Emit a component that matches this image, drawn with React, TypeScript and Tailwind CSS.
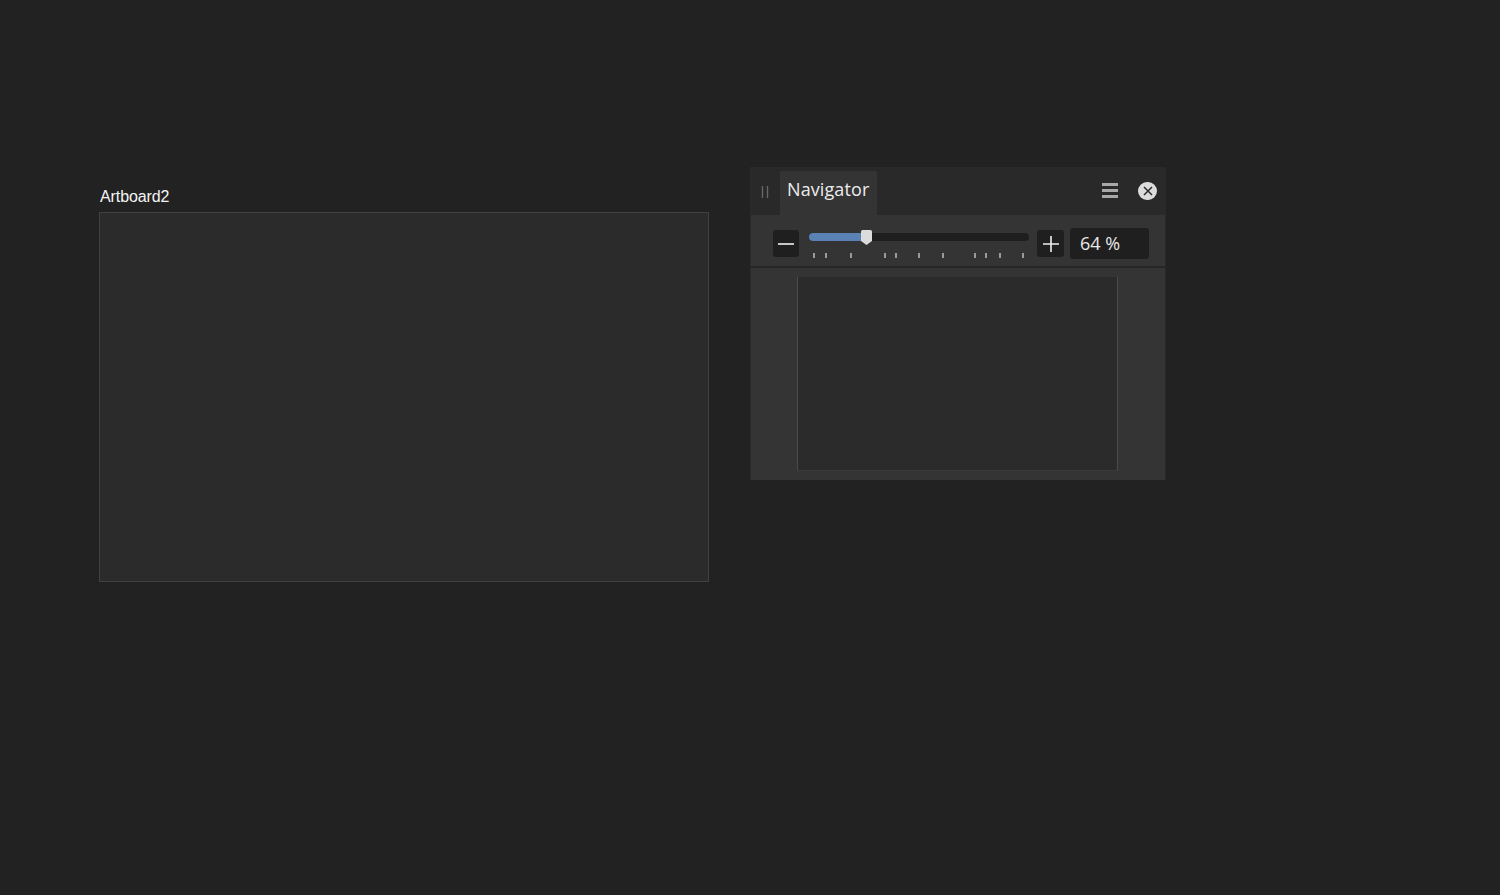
import React from 'react';

const TICKS = [813, 825, 850, 884, 895, 918, 942, 974, 985, 999, 1022];

const App: React.FC = () => {
    return (
        <div className="w-[1500px] h-[895px] bg-[#222222] flex items-start overflow-hidden">
            {/* artboard */}
            <div className="ml-[99px] mt-[188px] w-[610px]">
                <div className="pl-px h-[24px] text-[16px] leading-[18px] tracking-[-0.1px] text-[#f4f4f4] font-['Liberation_Sans',sans-serif]">Artboard2</div>
                <div className="h-[370px] bg-[#2b2b2b] border border-[#414141]"></div>
            </div>

            {/* navigator panel */}
            <div className="ml-[41px] mt-[167px] w-[416px] bg-[#292929] px-px font-['Open_Sans',sans-serif]">
                <div className="h-[48px] flex items-end">
                    <div className="ml-[10px] w-[19px] h-[48px] flex items-center justify-start">
                        <svg width="8" height="12" viewBox="0 0 8 12" className="mt-px">
                            <path d="M1.5 0v12M6.5 0v12" stroke="#666666" strokeWidth="1.4" fill="none" />
                        </svg>
                    </div>
                    <div className="w-[97px] h-[44px] bg-[#343434] rounded-t-[2px] pl-[7px] pb-[7px] flex items-center text-[18px] tracking-[0.1px] text-[#ececec]">Navigator</div>
                    <div className="ml-auto flex items-center h-[48px] pb-px">
                        <svg width="18" height="18" viewBox="0 0 18 18" className="mr-[19px]">
                            <path d="M1 2.5h16M1 8.5h16M1 14.5h16" stroke="#a8a8a8" strokeWidth="3" fill="none" />
                        </svg>
                        <div className="mr-[8px] w-[19px] h-[18px] rounded-full bg-[#dcdcdc] flex items-center justify-center">
                            <svg width="10" height="10" viewBox="0 0 10 10">
                                <path d="M1 1l8 8M9 1l-8 8" stroke="#2a2a2a" strokeWidth="1.5" fill="none" />
                            </svg>
                        </div>
                    </div>
                </div>

                <div className="bg-[#343434]">
                    <div className="h-[51px] flex items-start">
                        <button className="ml-[22px] mt-[15px] w-[26px] h-[27px] bg-[#1f1f1f] rounded-[3px] flex items-center justify-center">
                            <svg width="16" height="16" viewBox="0 0 16 16">
                                <path d="M0 8h16" stroke="#f0f0f0" strokeWidth="1.6" fill="none" />
                            </svg>
                        </button>
                        <div className="relative ml-[10px] mt-[18px] w-[220px] h-[8px] bg-[#1f1f1f] rounded-full">
                            <div className="w-[53px] h-[8px] bg-[#5a82b4] rounded-l-full"></div>
                            <svg width="11" height="15" viewBox="0 0 11 15" className="absolute left-[52px] top-[-3px]">
                                <path d="M0 1.5Q0 0 1.5 0h8Q11 0 11 1.5V11L5.5 15L0 11Z" fill="#dcdcdc" />
                            </svg>
                            <svg width="220" height="6" viewBox="0 0 220 6" className="absolute left-0 top-[20px]">
                                {TICKS.map(x => (
                                    <rect key={x} x={x - 809} y="0" width="2" height="5" fill="#9a9a9a" />
                                ))}
                            </svg>
                        </div>
                        <button className="ml-[8px] mt-[15px] w-[27px] h-[27px] bg-[#1f1f1f] rounded-[3px] flex items-center justify-center">
                            <svg width="18" height="18" viewBox="0 0 18 18">
                                <path d="M1 9h16M9 1v16" stroke="#f0f0f0" strokeWidth="1.6" fill="none" />
                            </svg>
                        </button>
                        <div className="ml-[6px] mt-[13px] w-[79px] h-[31px] bg-[#1f1f1f] rounded-[3px] pl-[10px] flex items-center text-[18px] text-[#e8e8e8]">64 %</div>
                    </div>
                    <div className="h-[2px] bg-[#262626]"></div>
                    <div className="h-[212px] pt-[8px] pl-[46px]">
                        <div className="w-[321px] h-[195px] bg-[#2b2b2b] border-x border-b border-t border-x-[#4a4a4a] border-t-[#353535] border-b-[#3a3a3a]"></div>
                    </div>
                </div>
            </div>
        </div>
    );
};

export default App;
